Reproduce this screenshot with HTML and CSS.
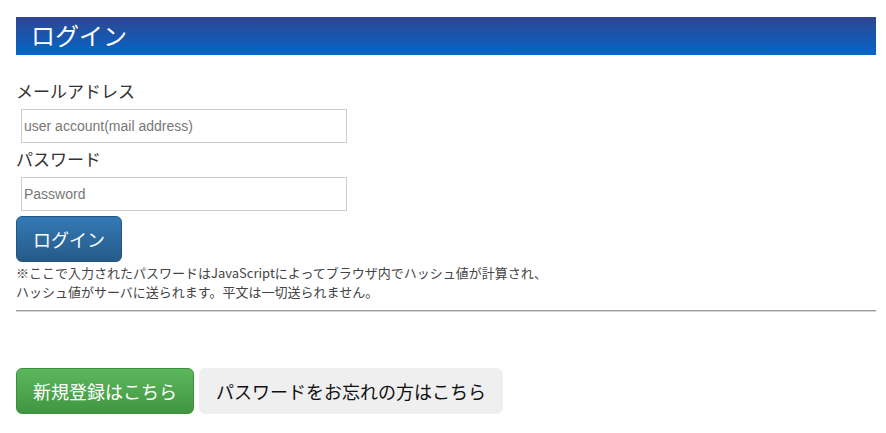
FILE: index.html
```html
<!DOCTYPE html>
<html lang="ja">
<head>
<meta charset="utf-8">
<title>ログイン</title>
<link rel="stylesheet" href="styles.css">
</head>
<body>
<div class="page">
  <h1 class="title">ログイン</h1>
  <form class="login-form">
    <label class="field-label" for="mail">メールアドレス</label>
    <input class="field-input" id="mail" type="text" placeholder="user account(mail address)">
    <label class="field-label second" for="pass">パスワード</label>
    <input class="field-input" id="pass" type="password" placeholder="Password">
    <button class="btn btn-primary" type="button">ログイン</button>
    <p class="note">※ここで入力されたパスワードはJavaScriptによってブラウザ内でハッシュ値が計算され、<br>ハッシュ値がサーバに送られます。平文は一切送られません。</p>
  </form>
  <hr class="divider">
  <div class="links">
    <button class="btn btn-success" type="button">新規登録はこちら</button>
    <button class="btn btn-default" type="button">パスワードをお忘れの方はこちら</button>
  </div>
</div>
</body>
</html>
```

FILE: styles.css
```css
html, body {
  margin: 0;
  padding: 0;
  background: #fff;
}
body {
  font-family: "Noto Sans CJK JP", "Liberation Sans", sans-serif;
  color: #333;
}
.page {
  width: 860px;
  margin-left: 16px;
  padding-top: 17px;
}
.title {
  margin: 0;
  height: 38px;
  line-height: 36px;
  padding-left: 15px;
  font-size: 24px;
  font-weight: normal;
  color: #fff;
  background: linear-gradient(to bottom, #2f4690 0%, #0366c9 100%);
}
.login-form {
  display: flex;
  flex-direction: column;
  align-items: flex-start;
}
.field-label {
  display: block;
  margin-top: 24px;
  height: 24px;
  line-height: 24px;
  font-size: 17px;
  color: #333;
}
.field-label.second {
  margin-top: 4px;
}
.field-input {
  box-sizing: border-box;
  margin: 6px 0 0 5px;
  width: 326px;
  height: 34px;
  padding: 0 2px;
  border: 1px solid #ccc;
  font-family: "Liberation Sans", Arial, sans-serif;
  font-size: 14px;
  color: #333;
  outline: none;
}
.field-input::placeholder {
  color: #777;
}
.btn {
  box-sizing: border-box;
  height: 46px;
  padding: 0 16px;
  border-radius: 6px;
  font-family: "Noto Sans CJK JP", sans-serif;
  font-size: 18px;
  line-height: 44px;
  cursor: pointer;
  white-space: nowrap;
}
.btn-primary {
  margin-top: 5px;
  color: #fff;
  border: 1px solid #245580;
  background: linear-gradient(to bottom, #337ab7 0%, #265a88 100%);
}
.note {
  margin: 1px 0 0 0;
  font-size: 13px;
  line-height: 19px;
  color: #444;
}
.divider {
  margin: 9px 0 0 0;
  height: 0;
  border: 0;
  border-top: 1px solid #9a9a9a;
  border-bottom: 1px solid #d8d8d8;
}
.links {
  display: flex;
  gap: 5px;
  margin-top: 56px;
}
.btn-success {
  color: #fff;
  border: 1px solid #3e8f3e;
  background: linear-gradient(to bottom, #5cb85c 0%, #419641 100%);
}
.btn-default {
  color: #111;
  border: 1px solid #efefef;
  background: #efefef;
}
```
